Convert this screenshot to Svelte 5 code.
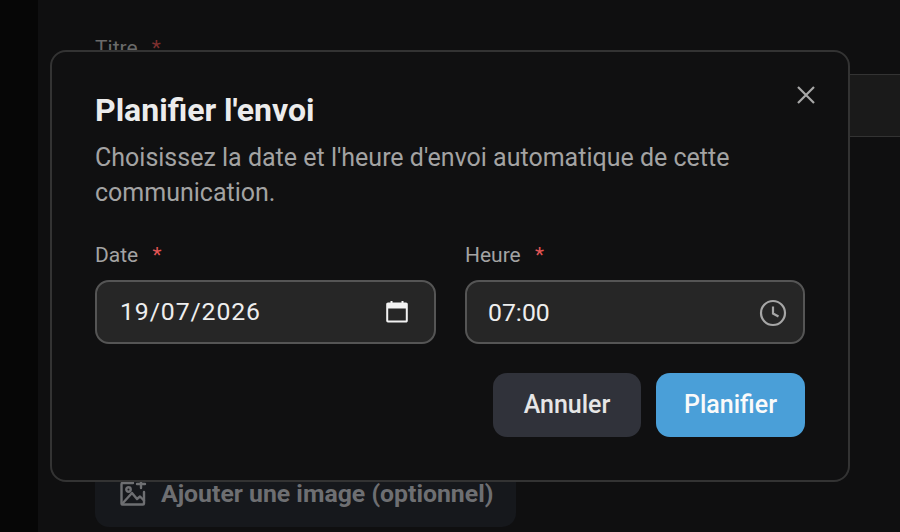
<script>
  let date = "19/07/2026";
  let time = "07:00";
</script>

<div class="page">
  <aside class="rail"></aside>
  <main class="form">
    <div class="field-label">Titre <span class="star">*</span></div>
    <div class="title-input"></div>
    <div class="spacer"></div>
    <div class="add-image">
      <svg width="28" height="28" viewBox="0 0 28 28" fill="none" stroke="currentColor" stroke-width="2.4" stroke-linejoin="round" stroke-linecap="round">
        <path d="M14 4H3.500a1 1 0 0 0-1 1v19.500a1 1 0 0 0 1 1H24a1 1 0 0 0 1-1V13" />
        <path d="M3 25l10-11 5 6 3-2.500 4 4" />
        <circle cx="9.500" cy="10.500" r="2.200" />
        <path d="M22 1v8M18 5h8" />
      </svg>
      <span>Ajouter une image (optionnel)</span>
    </div>
  </main>

  <div class="modal">
    <button class="close" aria-label="Fermer">
      <svg width="20" height="20" viewBox="0 0 20 20" stroke="currentColor" stroke-width="2.2" fill="none">
        <path d="M2 2l16 16M18 2L2 18" />
      </svg>
    </button>
    <h2>Planifier l'envoi</h2>
    <p>Choisissez la date et l'heure d'envoi automatique de cette communication.</p>
    <div class="fields">
      <div class="field">
        <div class="label">Date <span class="star">*</span></div>
        <div class="input date">
          <span>{date}</span>
          <svg width="22" height="24" viewBox="0 0 22 24" fill="none">
            <path d="M2 4.500h18a.8.8 0 0 1 .8.8v16.400a.8.8 0 0 1-.8.8H2a.8.8 0 0 1-.8-.8V5.300a.8.8 0 0 1 .8-.8z" stroke="#f2f2f2" stroke-width="2" />
            <path d="M1.500 5h19v4.500h-19z" fill="#f2f2f2" />
            <path d="M5.500 2v3M16.500 2v3" stroke="#f2f2f2" stroke-width="2" />
          </svg>
        </div>
      </div>
      <div class="field">
        <div class="label">Heure <span class="star">*</span></div>
        <div class="input">
          <span class="time">{time}</span>
          <svg class="clock" width="28" height="28" viewBox="0 0 28 28" fill="none" stroke="#a6a6a6" stroke-width="2.200">
            <circle cx="14" cy="14" r="12" />
            <path d="M14 7.500v7l5.500 3" />
          </svg>
        </div>
      </div>
    </div>
    <div class="actions">
      <button class="btn cancel">Annuler</button>
      <button class="btn submit">Planifier</button>
    </div>
  </div>
</div>

<style>
  :global(body) {
    margin: 0;
    background: #0f0f0f;
    font-family: Roboto, "Liberation Sans", sans-serif;
  }

  .page {
    position: relative;
    display: flex;
    width: 900px;
    height: 532px;
    overflow: hidden;
    background: #0f0f10;
  }

  .rail {
    width: 38px;
    flex: none;
    background: #060606;
  }

  .form {
    flex: 1;
    display: flex;
    flex-direction: column;
    padding: 36px 0 5px 57px;
  }

  .field-label {
    font-size: 21px;
    line-height: 24px;
    color: #6a6a6a;
  }

  .field-label .star {
    color: #7d2f2f;
    margin-left: 9px;
  }

  .title-input {
    height: 61px;
    margin: 14px -12px 0 0;
    background: #1a1a1a;
    border: 1px solid #333;
  }

  .spacer {
    flex: 1;
  }

  .add-image {
    width: 421px;
    height: 71px;
    box-sizing: border-box;
    padding: 3px 0 0 24px;
    display: flex;
    align-items: center;
    gap: 14px;
    border-radius: 14px;
    background: #16181c;
    color: #6e6f72;
    font-size: 24.8px;
    font-weight: 700;
  }

  .modal {
    position: absolute;
    left: 50px;
    top: 50px;
    width: 800px;
    height: 432px;
    box-sizing: border-box;
    padding: 40px 43px 0;
    border: 2px solid #333;
    border-radius: 16px;
    background: #101011;
    display: flex;
    flex-direction: column;
  }

  .close {
    position: absolute;
    top: 33px;
    right: 32px;
    padding: 0;
    width: 20px;
    height: 20px;
    border: 0;
    background: none;
    color: #a8a8a8;
  }

  .close svg {
    display: block;
  }

  h2 {
    margin: 0;
    font-size: 32px;
    line-height: 36px;
    font-weight: 700;
    color: #ececec;
  }

  p {
    margin: 12px 0 0;
    width: 680px;
    font-size: 25px;
    line-height: 35px;
    color: #a3a3a3;
  }

  .fields {
    display: grid;
    grid-template-columns: 341px 340px;
    gap: 29px;
    margin-top: 31px;
  }

  .label {
    font-size: 21px;
    line-height: 28px;
    color: #a3a3a3;
  }

  .label .star {
    color: #e25555;
    margin-left: 9px;
  }

  .input {
    height: 64px;
    margin-top: 11px;
    box-sizing: border-box;
    padding: 0 16px 0 21px;
    display: flex;
    align-items: center;
    justify-content: space-between;
    border: 2px solid #555;
    border-radius: 14px;
    background: #262626;
    color: #eee;
    font-size: 24.8px;
  }

  .date {
    padding: 0 26px 0 23px;
  }

  .date span {
    letter-spacing: 0.9px;
    margin-top: -2px;
  }

  .date svg {
    margin-top: -2px;
  }

  .clock {
    margin-top: 1px;
  }

  .actions {
    display: flex;
    justify-content: flex-end;
    gap: 15px;
    margin-top: 29px;
  }

  .btn {
    height: 64px;
    border: 0;
    border-radius: 14px;
    font-family: inherit;
    font-size: 25px;
    font-weight: 500;
    padding: 0 0 2px;
  }

  .cancel {
    width: 148px;
    background: #30323a;
    color: #e6e6e6;
  }

  .submit {
    width: 149px;
    background: #4a9fd8;
    color: #fafafa;
  }
</style>
